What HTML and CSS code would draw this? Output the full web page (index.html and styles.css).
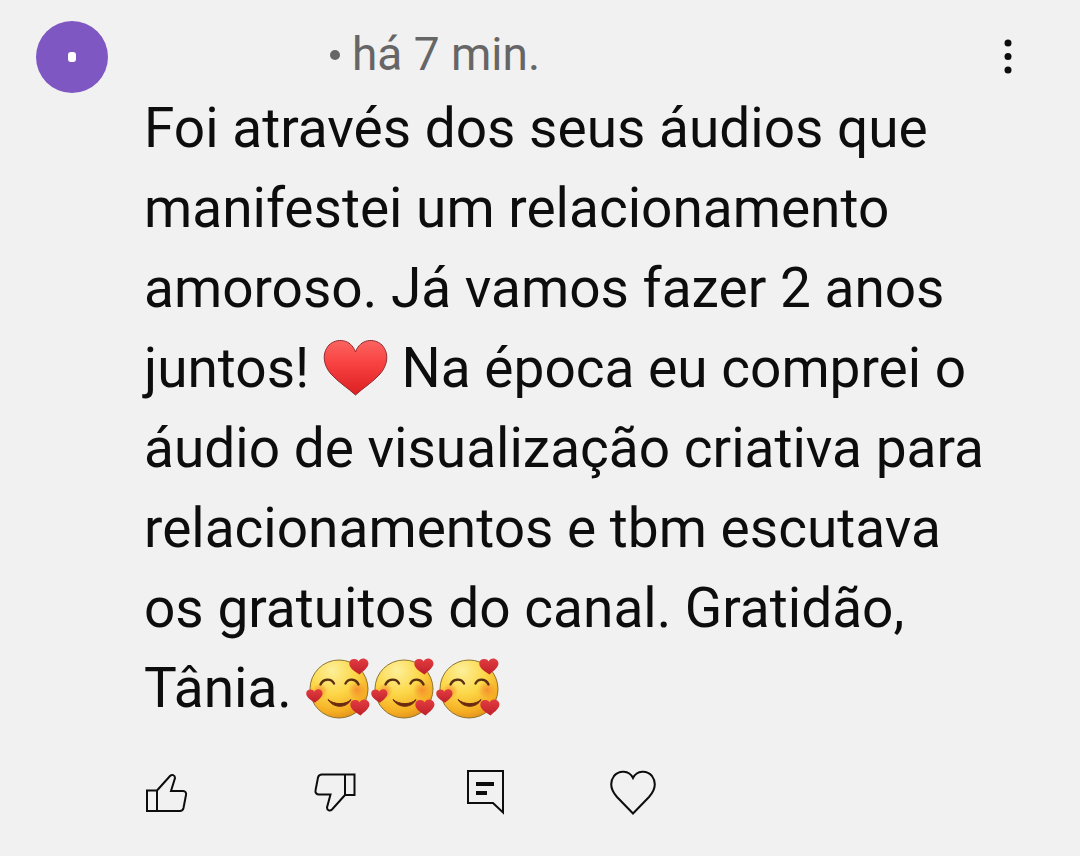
FILE: index.html
```
<!DOCTYPE html>
<html lang="pt-BR">
<head>
<meta charset="utf-8">
<meta name="viewport" content="width=device-width, initial-scale=1">
<title>Comentário</title>
<link rel="stylesheet" href="styles.css">
</head>
<body>
<svg class="defs" aria-hidden="true">
  <defs>
    <radialGradient id="face" cx="0.38" cy="0.18" r="0.9">
      <stop offset="0" stop-color="#fdf09a"/>
      <stop offset="0.45" stop-color="#fcd748"/>
      <stop offset="0.8" stop-color="#f5ad22"/>
      <stop offset="1" stop-color="#d9861a"/>
    </radialGradient>
    <linearGradient id="red" x1="0" y1="0" x2="0" y2="1">
      <stop offset="0" stop-color="#fa6560"/>
      <stop offset="0.4" stop-color="#f94343"/>
      <stop offset="1" stop-color="#dc1f22"/>
    </linearGradient>
    <radialGradient id="blush">
      <stop offset="0" stop-color="#f4802a" stop-opacity="0.75"/>
      <stop offset="1" stop-color="#f4802a" stop-opacity="0"/>
    </radialGradient>
    <linearGradient id="small-red" x1="0" y1="0" x2="0" y2="1">
      <stop offset="0" stop-color="#e23c40"/>
      <stop offset="1" stop-color="#c0202a"/>
    </linearGradient>
    <symbol id="mini-heart" viewBox="0 0 20 17">
      <path fill="url(#small-red)" d="M9.500 3.500C11 0 15.500-.500 18 2C20.500 5 19.500 8 17 10.500C15 12.800 12.500 14.500 10.500 16.500C7 14 3 12 1 8.500C-.500 5 .500 2 3.500 1.200C6.500.300 9 1.500 9.500 3.500Z"/>
    </symbol>
    <symbol id="smile" viewBox="0 0 65 64">
      <circle cx="33" cy="32" r="29" fill="url(#face)" stroke="#8f7430" stroke-width="1"/>
      <circle cx="51" cy="33" r="9" fill="url(#blush)"/>
      <circle cx="14" cy="34" r="8" fill="url(#blush)"/>
      <g fill="none" stroke="#5a3012" stroke-width="2.400" stroke-linecap="round">
        <path d="M14.500 27.500C17 21.500 25 21 28 26.500"/>
        <path d="M39.500 26.500C42.500 21 50 21.500 52.500 27.500"/>
      </g>
      <path d="M22 42.500C28 48 40 48 45 42.500C41 51.500 27 51.500 22 42.500Z" fill="#6b2a10" stroke="#6b2a10" stroke-width="1" stroke-linejoin="round"/>
      <use href="#mini-heart" x="43" y="1" width="20" height="17"/>
      <use href="#mini-heart" x="0" y="31" width="17" height="16"/>
      <use href="#mini-heart" x="44" y="42" width="20" height="17"/>
    </symbol>
  </defs>
</svg>
<article class="comment">
  <div class="avatar" role="img" aria-label="Avatar"></div>
  <div class="content">
    <header class="meta"><span class="dot"></span><time>há 7 min.</time></header>
    <p class="text">Foi através dos seus áudios que manifestei um relacionamento amoroso. Já vamos fazer 2 anos juntos! <svg class="emoji" viewBox="0 0 65 64" role="img" aria-label="coração"><path d="M32.500 15C37 2 51 .500 59 8C67 17 64 29 57 37C50 45 40 51 32.500 58C25 51 15 45 8 37C1 29-2 17 6 8C14 .500 28 2 32.500 15Z" fill="url(#red)" stroke="#8f2b30" stroke-width="1"/></svg> Na época eu comprei o áudio de visualização criativa para relacionamentos e tbm escutava os gratuitos do canal. Gratidão, Tânia. <span class="group"><svg class="emoji" role="img" aria-label="rosto com corações"><use href="#smile"/></svg><svg class="emoji" role="img" aria-label="rosto com corações"><use href="#smile"/></svg><svg class="emoji" role="img" aria-label="rosto com corações"><use href="#smile"/></svg></span></p>
    <footer class="actions">
      <div class="votes">
        <button class="action" type="button" aria-label="Gostei"><svg class="icon" viewBox="0 0 48 48"><path d="M3 20.500H13V41H3ZM13 20.500L26 6C28 4 31 5 31 8L27 21H39C41.500 21 42.500 23 42 25L39.500 38C39 40 38 41 36 41H13"/></svg></button>
        <button class="action" type="button" aria-label="Não gostei"><svg class="icon" viewBox="0 0 48 48"><path d="M33 4.500H42.500V25H33ZM33 25L20 39.500C18 41.500 15 40.500 15 37.500L18.500 24.500H7C4.500 24.500 3 22.500 3.500 20.500L6 7.500C6.500 5.500 8 4.500 10 4.500H33"/></svg></button>
      </div>
      <div class="replies">
        <button class="action" type="button" aria-label="Responder"><svg class="icon" viewBox="0 0 48 48"><path d="M2 1H37V42.500L27 33H2Z"/><path class="lines" d="M10 14H28M10 23H21"/></svg></button>
        <button class="action" type="button" aria-label="Amei"><svg class="icon" viewBox="0 0 48 48"><path d="M24 8C20 0 10 0 5 6C0 13 2 20 8 27L24 43.500L40 27C46 20 48 13 43 6C38 0 28 0 24 8Z"/></svg></button>
      </div>
    </footer>
  </div>
  <button class="more" type="button" aria-label="Mais opções"><svg class="more-icon" viewBox="0 0 8 36"><circle cx="4" cy="4" r="3.500"/><circle cx="4" cy="17.500" r="3.500"/><circle cx="4" cy="31" r="3.500"/></svg></button>
</article>
</body>
</html>
```
FILE: styles.css
```
body {
  margin: 0;
  background: #f1f1f1;
  color: #0d0d0d;
  font-family: Roboto, "Liberation Sans", sans-serif;
}

.defs {
  position: absolute;
  width: 0;
  height: 0;
}

.comment {
  display: grid;
  grid-template-columns: 72px 1fr 52px;
  padding: 21px 36px 36px;
}

.avatar {
  display: flex;
  align-items: center;
  justify-content: center;
  width: 72px;
  height: 72px;
  border-radius: 50%;
  background: #7e57c2;
}

.avatar::after {
  content: "";
  width: 8px;
  height: 10px;
  border-radius: 3px;
  background: #fff;
}

.content {
  padding-left: 36px;
}

.meta {
  display: flex;
  align-items: center;
  gap: 12px;
  height: 67px;
  padding-left: 186px;
  color: #666;
  font-size: 46px;
  line-height: 67px;
}

.dot {
  width: 10px;
  height: 10px;
  border-radius: 50%;
  background: #666;
}

.text {
  margin: 0;
  font-size: 55px;
  line-height: 80px;
}

.emoji {
  width: 65px;
  height: 64px;
  vertical-align: -14px;
}

.group {
  white-space: nowrap;
}

.actions {
  display: flex;
  gap: 106px;
  padding-top: 42px;
}

.votes {
  display: flex;
  gap: 120px;
}

.replies {
  display: flex;
  gap: 95px;
}

.action {
  width: 48px;
  height: 48px;
  padding: 0;
  border: 0;
  background: none;
}

.icon {
  display: block;
  width: 48px;
  height: 48px;
  fill: none;
  stroke: #0d0d0d;
  stroke-width: 2;
}

.lines {
  stroke-width: 4;
}

.more {
  align-self: start;
  justify-self: end;
  width: 72px;
  height: 72px;
  padding: 0;
  border: 0;
  background: none;
}

.more-icon {
  display: block;
  width: 8px;
  height: 36px;
  margin: 0 auto;
  fill: #0d0d0d;
}
```
